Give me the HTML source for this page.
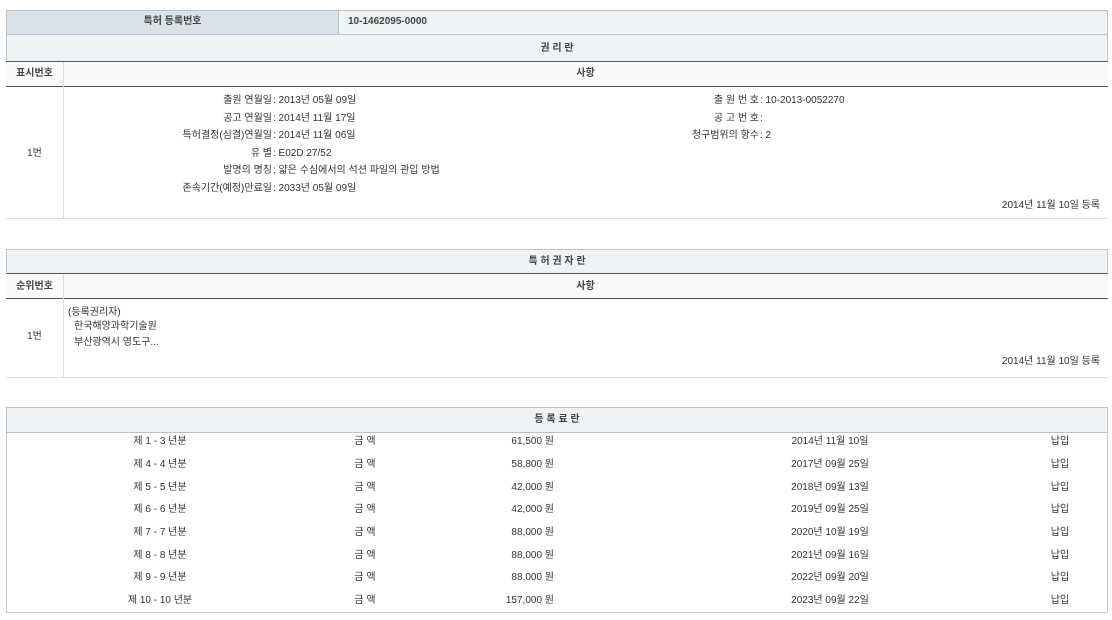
<!DOCTYPE html>
<html><head><meta charset="utf-8"><style>
*{margin:0;padding:0;box-sizing:border-box}
body{width:1112px;height:620px;background:#fff;font-family:"Liberation Sans","Noto Sans CJK KR",sans-serif;font-size:10px;color:#333;position:relative;overflow:hidden}
.a{position:absolute;white-space:nowrap;line-height:12px}
.box{position:absolute}
.b{font-weight:bold;color:#444}
.r{text-align:right}
.c{text-align:center}
</style></head><body>
<!-- table 1 -->
<div class="box" style="left:6px;top:10px;width:1102px;height:25px;background:#eef3f6;border:1px solid #b8c4cc"></div>
<div class="box" style="left:6px;top:10px;width:333px;height:25px;background:#d9e2e9;border:1px solid #b8c4cc"></div>
<div class="a b c" style="left:6px;top:16px;width:333px">특허 등록번호</div>
<div class="a b" style="left:348px;top:16px">10-1462095-0000</div>
<div class="box" style="left:6px;top:35px;width:1102px;height:27px;background:#eef3f6;border:1px solid #b8c4cc;border-top:none;border-bottom:1px solid #555"></div>
<div class="a b c" style="left:6px;top:43px;width:1102px">권 리 란</div>
<div class="box" style="left:6px;top:62px;width:1102px;height:25px;background:#fafafa;border-bottom:1px solid #555"></div>
<div class="box" style="left:63px;top:62px;width:1px;height:157px;background:#ddd"></div>
<div class="a b c" style="left:6px;top:68px;width:57px">표시번호</div>
<div class="a b c" style="left:63px;top:68px;width:1045px">사항</div>
<div class="box" style="left:6px;top:218px;width:1102px;height:1px;background:#ddd"></div>
<div class="a c" style="left:6px;top:148px;width:57px">1번</div>
<div class="a r" style="left:100px;top:95px;width:172px">출원 연월일</div><div class="a" style="left:273px;top:95px">: 2013년 05월 09일</div>
<div class="a r" style="left:100px;top:113px;width:172px">공고 연월일</div><div class="a" style="left:273px;top:113px">: 2014년 11월 17일</div>
<div class="a r" style="left:100px;top:130px;width:172px">특허결정(심결)연월일</div><div class="a" style="left:273px;top:130px">: 2014년 11월 06일</div>
<div class="a r" style="left:100px;top:148px;width:172px">유 별</div><div class="a" style="left:273px;top:148px">: E02D 27/52</div>
<div class="a r" style="left:100px;top:165px;width:172px">발명의 명칭</div><div class="a" style="left:273px;top:165px">: 얇은 수심에서의 석션 파일의 관입 방법</div>
<div class="a r" style="left:100px;top:183px;width:172px">존속기간(예정)만료일</div><div class="a" style="left:273px;top:183px">: 2033년 05월 09일</div>
<div class="a r" style="left:600px;top:95px;width:159px">출 원 번 호</div><div class="a" style="left:760px;top:95px">: 10-2013-0052270</div>
<div class="a r" style="left:600px;top:113px;width:159px">공 고 번 호</div><div class="a" style="left:760px;top:113px">:</div>
<div class="a r" style="left:600px;top:130px;width:159px">청구범위의 항수</div><div class="a" style="left:760px;top:130px">: 2</div>
<div class="a r" style="left:800px;top:200px;width:300px">2014년 11월 10일 등록</div>
<!-- table 2 -->
<div class="box" style="left:6px;top:249px;width:1102px;height:25px;background:#eef3f6;border:1px solid #b8c4cc;border-bottom:1px solid #555"></div>
<div class="a b c" style="left:6px;top:256px;width:1102px">특 허 권 자 란</div>
<div class="box" style="left:6px;top:274px;width:1102px;height:25px;background:#fafafa;border-bottom:1px solid #555"></div>
<div class="box" style="left:63px;top:274px;width:1px;height:103px;background:#ddd"></div>
<div class="a b c" style="left:6px;top:281px;width:57px">순위번호</div>
<div class="a b c" style="left:63px;top:281px;width:1045px">사항</div>
<div class="box" style="left:6px;top:377px;width:1102px;height:1px;background:#ddd"></div>
<div class="a c" style="left:6px;top:331px;width:57px">1번</div>
<div class="a" style="left:68px;top:307px">(등록권리자)</div>
<div class="a" style="left:74px;top:321px">한국해양과학기술원</div>
<div class="a" style="left:74px;top:337px">부산광역시 영도구...</div>
<div class="a r" style="left:800px;top:356px;width:300px">2014년 11월 10일 등록</div>
<!-- table 3 -->
<div class="box" style="left:6px;top:407px;width:1102px;height:206px;border:1px solid #ccc"></div>
<div class="box" style="left:6px;top:407px;width:1102px;height:26px;background:#eef3f6;border:1px solid #b8c4cc"></div>
<div class="a b c" style="left:6px;top:414px;width:1102px">등 록 료 란</div>
<div class="a c" style="left:60px;top:436px;width:200px">제 1 - 3 년분</div><div class="a c" style="left:320px;top:436px;width:90px">금 액</div><div class="a r" style="left:450px;top:436px;width:104px">61,500 원</div><div class="a c" style="left:730px;top:436px;width:200px">2014년 11월 10일</div><div class="a c" style="left:1020px;top:436px;width:80px">납입</div>
<div class="a c" style="left:60px;top:459px;width:200px">제 4 - 4 년분</div><div class="a c" style="left:320px;top:459px;width:90px">금 액</div><div class="a r" style="left:450px;top:459px;width:104px">58,800 원</div><div class="a c" style="left:730px;top:459px;width:200px">2017년 09월 25일</div><div class="a c" style="left:1020px;top:459px;width:80px">납입</div>
<div class="a c" style="left:60px;top:482px;width:200px">제 5 - 5 년분</div><div class="a c" style="left:320px;top:482px;width:90px">금 액</div><div class="a r" style="left:450px;top:482px;width:104px">42,000 원</div><div class="a c" style="left:730px;top:482px;width:200px">2018년 09월 13일</div><div class="a c" style="left:1020px;top:482px;width:80px">납입</div>
<div class="a c" style="left:60px;top:504px;width:200px">제 6 - 6 년분</div><div class="a c" style="left:320px;top:504px;width:90px">금 액</div><div class="a r" style="left:450px;top:504px;width:104px">42,000 원</div><div class="a c" style="left:730px;top:504px;width:200px">2019년 09월 25일</div><div class="a c" style="left:1020px;top:504px;width:80px">납입</div>
<div class="a c" style="left:60px;top:527px;width:200px">제 7 - 7 년분</div><div class="a c" style="left:320px;top:527px;width:90px">금 액</div><div class="a r" style="left:450px;top:527px;width:104px">88,000 원</div><div class="a c" style="left:730px;top:527px;width:200px">2020년 10월 19일</div><div class="a c" style="left:1020px;top:527px;width:80px">납입</div>
<div class="a c" style="left:60px;top:550px;width:200px">제 8 - 8 년분</div><div class="a c" style="left:320px;top:550px;width:90px">금 액</div><div class="a r" style="left:450px;top:550px;width:104px">88,000 원</div><div class="a c" style="left:730px;top:550px;width:200px">2021년 09월 16일</div><div class="a c" style="left:1020px;top:550px;width:80px">납입</div>
<div class="a c" style="left:60px;top:572px;width:200px">제 9 - 9 년분</div><div class="a c" style="left:320px;top:572px;width:90px">금 액</div><div class="a r" style="left:450px;top:572px;width:104px">88,000 원</div><div class="a c" style="left:730px;top:572px;width:200px">2022년 09월 20일</div><div class="a c" style="left:1020px;top:572px;width:80px">납입</div>
<div class="a c" style="left:60px;top:595px;width:200px">제 10 - 10 년분</div><div class="a c" style="left:320px;top:595px;width:90px">금 액</div><div class="a r" style="left:450px;top:595px;width:104px">157,000 원</div><div class="a c" style="left:730px;top:595px;width:200px">2023년 09월 22일</div><div class="a c" style="left:1020px;top:595px;width:80px">납입</div>
</body></html>
